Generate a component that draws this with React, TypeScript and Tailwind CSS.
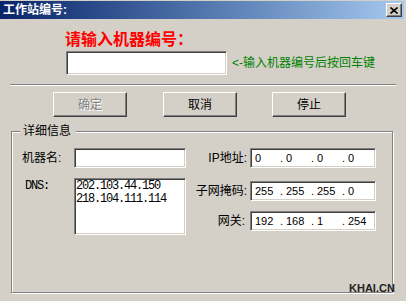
import React from "react";

const raised =
  "border border-t-white border-l-white border-r-[#404040] border-b-[#404040] shadow-[inset_-1px_-1px_0_#808080]";
const sunken =
  "border border-t-[#808080] border-l-[#808080] border-r-white border-b-white shadow-[inset_1px_1px_0_#404040,inset_-1px_-1px_0_#d4d0c8]";

function IpField({ parts }: { parts: string[] }) {
  return (
    <div className={`w-[126px] h-[20px] bg-white flex items-center pl-[4px] text-[11px] leading-[14px] text-black font-['Liberation_Sans',sans-serif] ${sunken}`}>
      {parts.map((p, i) => (
        <React.Fragment key={i}>
          <span className="w-[25px]">{p}</span>
          {i < 3 && <span className="w-[6px]">.</span>}
        </React.Fragment>
      ))}
    </div>
  );
}

function Btn({ label, disabled }: { label: string; disabled?: boolean }) {
  return (
    <button
      type="button"
      className={`w-[74px] h-[25px] bg-[#d4d0c8] text-[12px] leading-[14px] flex items-center justify-center ${raised} ${
        disabled ? "text-[#808080] [text-shadow:1px_1px_0_#fff]" : "text-black"
      }`}
    >
      {label}
    </button>
  );
}

export default function App() {
  return (
    <div className="relative w-[406px] h-[301px] overflow-hidden bg-[#d4d0c8] font-['Liberation_Sans','Noto_Sans_CJK_SC',sans-serif] text-black">
      {/* 标题栏 */}
      <div className="mt-[1px] w-[404px] h-[18px] flex items-center justify-between bg-gradient-to-r from-[#0a246a] to-[#a6caf0]">
        <span className="pl-[3px] text-[12px] leading-[14px] font-bold text-white">工作站编号:</span>
        <button type="button" aria-label="关闭" className={`mr-[2px] w-[16px] h-[14px] bg-[#d4d0c8] flex items-center justify-center ${raised}`}>
          <svg width="8" height="7" viewBox="0 0 8 7" aria-hidden="true">
            <path d="M0.5 0.5L7.5 6.5M7.5 0.5L0.5 6.5" stroke="#000" strokeWidth="1.6" fill="none" />
          </svg>
        </button>
      </div>

      {/* 输入机器编号 */}
      <div className="mt-[12px] ml-[65px] h-[18px] text-[16px] leading-[18px] font-bold text-[#ff0000]">请输入机器编号：</div>
      <div className="mt-[2px] ml-[66px] flex items-center">
        <input type="text" className={`w-[161px] h-[24px] bg-white outline-none ${sunken}`} />
        <span className="ml-[5px] text-[12px] leading-[14px] text-[#008000]">&lt;-输入机器编号后按回车键</span>
      </div>

      <div className="mt-[9px] ml-[10px] w-[386px] h-[2px] border-t border-t-[#808080] border-b border-b-white" />

      {/* 按钮 */}
      <div className="mt-[6px] flex">
        <div className="ml-[53px]"><Btn label="确定" disabled /></div>
        <div className="ml-[36px]"><Btn label="取消" /></div>
        <div className="ml-[35px]"><Btn label="停止" /></div>
      </div>

      {/* 详细信息 */}
      <fieldset className="mt-[7px] ml-[11px] w-[382px] h-[169px] border border-[#808080] shadow-[1px_1px_0_#fff,inset_1px_1px_0_#fff]">
        <legend className="ml-[8px] pl-[3px] pr-[5px] bg-[#d4d0c8] text-[12px] leading-[14px]">详细信息</legend>
        <div className="mt-[10px] flex text-[12px] leading-[14px]">
          <div className="pl-[10px] flex flex-col">
            <div className="flex items-center h-[20px]">
              <span className="w-[52px]">机器名:</span>
              <input type="text" className={`w-[112px] h-[20px] bg-white outline-none ${sunken}`} />
            </div>
            <div className="mt-[10px] flex items-start">
              <span className="w-[52px] pl-[3px] pt-[2px] font-['Liberation_Mono',monospace] text-[12px] leading-[13px] tracking-[-1.2px]">DNS:</span>
              <textarea
                readOnly
                value={"202.103.44.150\n218.104.111.114"}
                className={`w-[112px] h-[57px] bg-white resize-none overflow-hidden outline-none pl-[1px] pt-[1px] font-['Liberation_Mono',monospace] text-[12px] leading-[13px] tracking-[-1.2px] ${sunken}`}
              />
            </div>
          </div>
          <div className="flex flex-col">
            <div className="flex items-center">
              <span className="w-[64px] pr-[3px] text-right">IP地址:</span>
              <IpField parts={["0", "0", "0", "0"]} />
            </div>
            <div className="mt-[13px] flex items-center">
              <span className="w-[64px] pr-[3px] text-right">子网掩码:</span>
              <IpField parts={["255", "255", "255", "0"]} />
            </div>
            <div className="mt-[10px] flex items-center">
              <span className="w-[64px] pr-[5px] text-right">网关:</span>
              <IpField parts={["192", "168", "1", "254"]} />
            </div>
          </div>
        </div>
      </fieldset>

      <span className="absolute left-[349px] top-[283px] text-[11px] leading-[11px] font-bold text-[#222] font-['Liberation_Sans',sans-serif]">KHAI.CN</span>
    </div>
  );
}
